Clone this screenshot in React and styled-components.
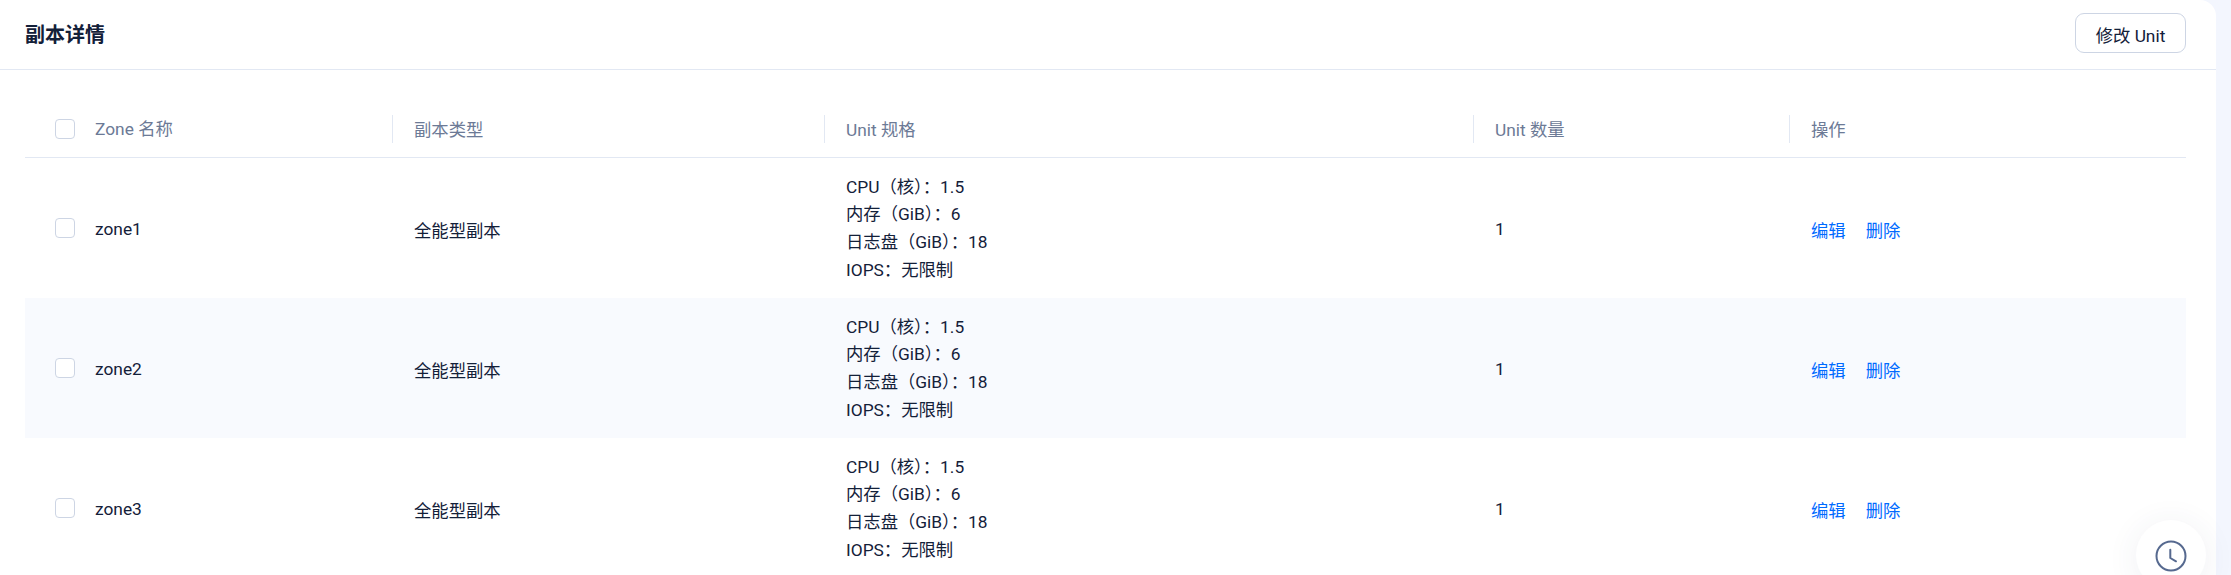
import React from "react";
import styled, { createGlobalStyle } from "styled-components";

const GlobalStyle = createGlobalStyle`
  html, body {
    margin: 0;
    height: 100%;
    overflow: hidden;
    background: #f3f6fe;
    font-family: Roboto, "Noto Sans CJK SC", sans-serif;
  }
`;

const COLUMNS = "70px 297px 432px 649px 316px 397px";

const Page = styled.div`
  position: relative;
  width: 2231px;
  height: 575px;
  overflow: hidden;
`;

const Card = styled.section`
  width: 2216px;
  height: 575px;
  background: #fff;
  border-radius: 0 16px 0 0;
`;

const CardHeader = styled.header`
  display: flex;
  align-items: center;
  justify-content: space-between;
  height: 70px;
  box-sizing: border-box;
  padding: 0 30px 3px 25px;
  border-bottom: 1px solid #e2e8f3;
`;

const Title = styled.h2`
  margin: 0;
  font-size: 20px;
  font-weight: 600;
  color: #132039;
`;

const Button = styled.button`
  width: 111px;
  height: 40px;
  padding: 3px 0 0;
  font: inherit;
  font-size: 17.33px;
  color: #132039;
  background: #fff;
  border: 1px solid #cdd5e4;
  border-radius: 9px;
`;

const Table = styled.div`
  margin: 30px 30px 0 25px;
`;

const HeadRow = styled.div`
  display: grid;
  grid-template-columns: ${COLUMNS};
  align-items: center;
  height: 58px;
  box-sizing: border-box;
  border-bottom: 1px solid #e2e8f3;
  color: #6c7a96;
  font-size: 17.33px;
`;

const HeadCell = styled.div`
  height: 28px;
  line-height: 30px;
  padding-left: 21px;
  border-left: 1px solid #e2e8f3;
`;

const NameHead = styled.div`
  line-height: 30px;
`;

const BodyRow = styled.div`
  display: grid;
  grid-template-columns: ${COLUMNS};
  align-items: center;
  height: 140px;
  background: ${(p) => (p.$striped ? "#f8fafe" : "#fff")};
  color: #132039;
  font-size: 17.33px;
`;

const CheckCell = styled.div`
  padding-left: 30px;
  display: flex;
  align-items: center;
`;

const Checkbox = styled.span`
  display: block;
  width: 20px;
  height: 20px;
  box-sizing: border-box;
  background: #fff;
  border: 1px solid #cdd5e4;
  border-radius: 4px;
`;

const NameCell = styled.div`
  padding-top: 2px;
`;

const Cell = styled.div`
  padding: 2px 0 0 22px;
`;

const SpecLine = styled.div`
  height: 27.6px;
  line-height: 27.6px;
`;

const Actions = styled.div`
  display: flex;
  gap: 20px;
  padding: 2px 0 0 22px;
`;

const ActionLink = styled.a`
  color: #006aff;
  cursor: pointer;
`;

const FloatButton = styled.div`
  position: absolute;
  left: 2136px;
  top: 520px;
  width: 70px;
  height: 70px;
  box-sizing: border-box;
  padding-top: 1px;
  display: flex;
  align-items: center;
  justify-content: center;
  background: #fff;
  border-radius: 50%;
  box-shadow: 0 4px 32px rgba(54, 69, 99, 0.08);
  svg {
    display: block;
  }
`;

const ZONES = ["zone1", "zone2", "zone3"];

export default function App() {
  return (
    <Page>
      <GlobalStyle />
      <Card>
        <CardHeader>
          <Title>副本详情</Title>
          <Button>修改 Unit</Button>
        </CardHeader>
        <Table>
          <HeadRow>
            <CheckCell>
              <Checkbox />
            </CheckCell>
            <NameHead>Zone 名称</NameHead>
            <HeadCell>副本类型</HeadCell>
            <HeadCell>Unit 规格</HeadCell>
            <HeadCell>Unit 数量</HeadCell>
            <HeadCell>操作</HeadCell>
          </HeadRow>
          {ZONES.map((zone, index) => (
            <BodyRow key={zone} $striped={index === 1}>
              <CheckCell>
                <Checkbox />
              </CheckCell>
              <NameCell>{zone}</NameCell>
              <Cell>全能型副本</Cell>
              <Cell>
                <SpecLine>CPU（核）：1.5</SpecLine>
                <SpecLine>内存（GiB）：6</SpecLine>
                <SpecLine>日志盘（GiB）：18</SpecLine>
                <SpecLine>IOPS：无限制</SpecLine>
              </Cell>
              <Cell>1</Cell>
              <Actions>
                <ActionLink>编辑</ActionLink>
                <ActionLink>删除</ActionLink>
              </Actions>
            </BodyRow>
          ))}
        </Table>
      </Card>
      <FloatButton>
        <svg width="32" height="32" viewBox="0 0 32 32" fill="none" stroke="#56698f" strokeWidth="2" strokeLinecap="round" strokeLinejoin="round">
          <circle cx="16" cy="16" r="14.5" />
          <path d="M15.300 9.700V18L21 21.300" />
        </svg>
      </FloatButton>
    </Page>
  );
}
